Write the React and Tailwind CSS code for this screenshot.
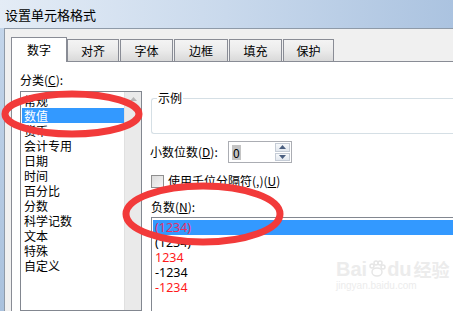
import React from "react";

const categories = ["常规", "数值", "货币", "会计专用", "日期", "时间", "百分比", "分数", "科学记数", "文本", "特殊", "自定义"];

const negatives = [
   { text: "(1234)", color: "text-[#e2306a]", selected: true },
   { text: "(1234)", color: "text-black" },
   { text: "1234", color: "text-[#ff1a1a]" },
   { text: "-1234", color: "text-black" },
   { text: "-1234", color: "text-[#ff1a1a]" },
];

const tabs = [
   { label: "对齐", w: "w-[52px]", ml: "ml-0" },
   { label: "字体", w: "w-[53px]", ml: "ml-[1px]" },
   { label: "边框", w: "w-[54px]", ml: "ml-[1px]" },
   { label: "填充", w: "w-[53px]", ml: "ml-[1px]" },
   { label: "保护", w: "w-[51px]", ml: "ml-[1px]" },
];

const Tab = ({ label, w, ml }) => (
   <div
      className={`${w} ${ml} h-[22px] flex items-center justify-center border border-b-0 border-[#898c95] bg-gradient-to-b from-[#f4f4f4] via-[#ebebeb] to-[#d9d9d9] text-[12px] leading-none`}
   >
      {label}
   </div>
);

export default function App() {
   return (
      <div className="relative w-[453px] h-[311px] overflow-hidden flex flex-col bg-[#f0f0f0] text-black font-['Noto_Sans_CJK_SC','Noto_Sans',sans-serif]">
         {/* title bar */}
         <div className="h-[28px] shrink-0 flex items-center pl-[5px] bg-gradient-to-r from-[#e4ecf6] via-[#c9d9ec] to-[#abc3e0] text-[13px] leading-none">
            设置单元格格式
         </div>

         <div className="flex flex-1 min-h-0">
            <div className="w-[4px] shrink-0 bg-gradient-to-b from-[#c3d5ea] to-[#a9c1dd]" />
            <div className="flex-1 flex flex-col border-l border-t border-[#8e9aa8] pl-[6px] pt-[8px]">
               {/* tabs */}
               <div className="flex items-end h-[24px] relative z-10">
                  <div className="w-[56px] h-[25px] -mb-[1px] flex items-center justify-center border border-b-0 border-[#898c95] bg-white text-[12px] leading-none">
                     数字
                  </div>
                  {tabs.map((t) => (
                     <Tab key={t.label} {...t} />
                  ))}
               </div>

               {/* panel */}
               <div className="flex-1 flex bg-white border-l border-t border-[#898c95] pl-[8px] pt-[10px] text-[12px]">
                  {/* category column */}
                  <div className="w-[122px] shrink-0 flex flex-col">
                     <div className="h-[16px] leading-[16px] mb-[3px]">
                        分类(<span className="underline">C</span>):
                     </div>
                     <div className="flex-1 flex border border-[#828790]">
                        <div className="flex-1 flex flex-col pt-[1px] pl-[1px]">
                           {categories.map((c) => (
                              <div
                                 key={c}
                                 className={`h-[15px] leading-[15px] pl-[2px] ${c === "数值" ? "bg-[#3399ff] text-white" : ""}`}
                              >
                                 {c}
                              </div>
                           ))}
                        </div>
                        <div className="w-[17px] shrink-0 bg-[#eaeaea] border-l border-[#e0e0e0] flex justify-center pt-[5px]">
                           <svg width="7" height="4" viewBox="0 0 7 4">
                              <path d="M0 4 L3.5 0 L7 4 Z" fill="#b5b5b5" />
                           </svg>
                        </div>
                     </div>
                  </div>

                  {/* right column */}
                  <div className="flex-1 flex flex-col pl-[8px] pt-[26px]">
                     <div className="relative h-[36px] ml-[1px] border border-[#d5dfe5] border-r-0 rounded-l-[3px]">
                        <span className="absolute -top-[9px] left-[5px] bg-white px-[1px] leading-[16px]">示例</span>
                     </div>

                     <div className="flex items-center h-[22px] mt-[7px]">
                        <span className="w-[78px] leading-[16px]">
                           小数位数(<span className="underline">D</span>):
                        </span>
                        <div className="w-[64px] h-[22px] flex border border-[#abadb3] bg-white">
                           <div className="flex-1 flex items-center pl-[3px]">
                              <span className="bg-[#c4c4c4] px-[1px] leading-[15px]">0</span>
                           </div>
                           <div className="w-[16px] flex flex-col py-[1px] pr-[1px] gap-[1px]">
                              <div className="flex-1 flex items-center justify-center border border-[#c5ccd6] bg-gradient-to-b from-[#f7f9fb] to-[#e3e8ef]">
                                 <svg width="7" height="4" viewBox="0 0 7 4">
                                    <path d="M0 4 L3.5 0 L7 4 Z" fill="#4b5f80" />
                                 </svg>
                              </div>
                              <div className="flex-1 flex items-center justify-center border border-[#c5ccd6] bg-gradient-to-b from-[#f7f9fb] to-[#e3e8ef]">
                                 <svg width="7" height="4" viewBox="0 0 7 4">
                                    <path d="M0 0 L3.5 4 L7 0 Z" fill="#4b5f80" />
                                 </svg>
                              </div>
                           </div>
                        </div>
                     </div>

                     <div className="flex items-center mt-[11px] ml-[1px] h-[14px]">
                        <div className="w-[13px] h-[13px] border border-[#8f8f8f] bg-gradient-to-br from-[#dcdcdc] to-[#f6f6f6] mr-[4px]" />
                        <span className="leading-[16px]">
                           使用千位分隔符(,)(<span className="underline">U</span>)
                        </span>
                     </div>

                     <div className="mt-[11px] ml-[1px] h-[16px] leading-[16px]">
                        负数(<span className="underline">N</span>):
                     </div>

                     <div className="flex-1 ml-[1px] mt-[2px] border-l border-t border-[#828790] pt-[2px] pl-[1px]">
                        {negatives.map((n, i) => (
                           <div
                              key={i}
                              className={`h-[15px] leading-[15px] pl-[2px] text-[12.5px] font-['Noto_Sans',sans-serif] ${n.color} ${n.selected ? "bg-[#3399ff]" : ""}`}
                           >
                              {n.text}
                           </div>
                        ))}
                     </div>
                  </div>
               </div>
            </div>
         </div>

         {/* baidu watermark */}
         <div className="absolute left-[336px] top-[258px] flex flex-col text-[#ececec] pointer-events-none">
            <div className="flex items-center text-[20px] leading-[22px] font-bold font-['Liberation_Sans',sans-serif]">
               <span>Bai</span>
               <svg width="18" height="18" viewBox="0 0 18 18" className="mx-[1px]">
                  <g fill="none" stroke="#e6e6e6" strokeWidth="1.5">
                     <ellipse cx="9" cy="12" rx="5" ry="4" />
                     <circle cx="4" cy="6" r="2" />
                     <circle cx="8" cy="3" r="2" />
                     <circle cx="12" cy="3" r="2" />
                     <circle cx="15" cy="7" r="2" />
                  </g>
               </svg>
               <span>du</span>
               <span className="ml-[2px] text-[18px] font-['Noto_Sans_CJK_SC',sans-serif]">经验</span>
            </div>
            <div className="text-[10px] leading-[12px] font-['Liberation_Sans',sans-serif]">jingyan.baidu.com</div>
         </div>

         {/* red annotation circles */}
         <svg className="absolute left-0 top-0 pointer-events-none" width="453" height="311" viewBox="0 0 453 311">
            <ellipse cx="72" cy="114" rx="67" ry="20" fill="none" stroke="#f23a3a" strokeWidth="7" />
            <ellipse cx="203" cy="214" rx="77" ry="28" fill="none" stroke="#f23a3a" strokeWidth="7" />
         </svg>
      </div>
   );
}
